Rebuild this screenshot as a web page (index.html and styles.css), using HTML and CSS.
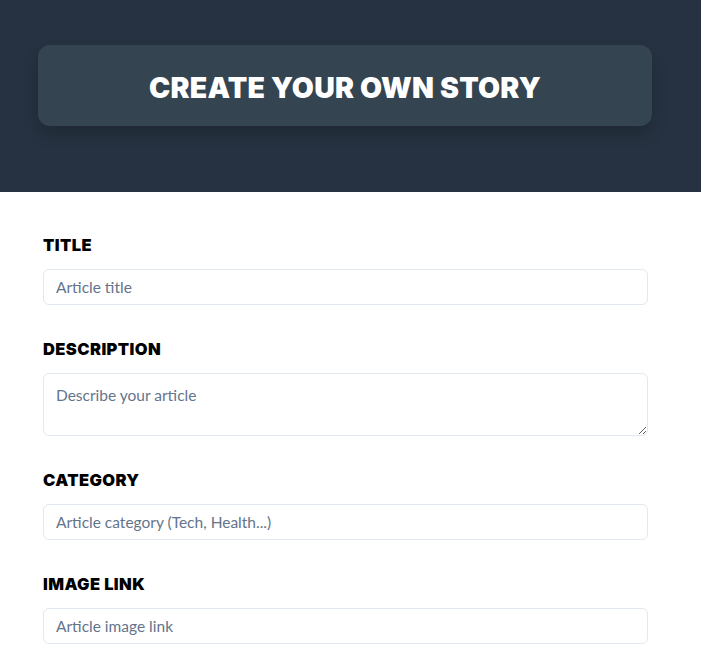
FILE: index.html
```html
<!DOCTYPE html>
<html lang="en">
<head>
<meta charset="utf-8">
<title>Create your own story</title>
<link rel="stylesheet" href="styles.css">
</head>
<body>
<header class="hero">
  <div class="hero-card">
    <h1 class="hero-title">CREATE YOUR OWN STORY</h1>
  </div>
</header>
<main class="form">
  <div class="field">
    <label class="label" for="title">TITLE</label>
    <input class="input" id="title" type="text" placeholder="Article title">
  </div>
  <div class="field">
    <label class="label" for="desc">DESCRIPTION</label>
    <textarea class="input textarea" id="desc" placeholder="Describe your article"></textarea>
  </div>
  <div class="field">
    <label class="label" for="cat">CATEGORY</label>
    <input class="input" id="cat" type="text" placeholder="Article category (Tech, Health...)">
  </div>
  <div class="field">
    <label class="label" for="img">IMAGE LINK</label>
    <input class="input" id="img" type="text" placeholder="Article image link">
  </div>
</main>
</body>
</html>
```
FILE: styles.css
```css
* { box-sizing: border-box; }
html, body { margin: 0; padding: 0; background: #ffffff; }
body { font-family: Lato, "Noto Sans", sans-serif; }

.hero {
  background: #263241;
  height: 192px;
  padding: 45px 49px 0 38px;
}
.hero-card {
  background: #344451;
  height: 81px;
  border-radius: 12px;
  box-shadow: 0 8px 16px rgba(0, 0, 0, 0.18);
  display: flex;
  align-items: center;
  justify-content: center;
  padding-top: 3px;
}
.hero-title {
  margin: 0;
  color: #ffffff;
  font-family: Inter, Roboto, sans-serif;
  font-weight: 900;
  font-size: 28.5px;
  letter-spacing: 0.2px;
}

.form {
  padding: 43px 53px 0 43px;
  display: flex;
  flex-direction: column;
  gap: 34px;
}
.field {
  display: flex;
  flex-direction: column;
  gap: 14px;
}
.label {
  font-family: Inter, Roboto, sans-serif;
  font-weight: 900;
  font-size: 16.5px;
  line-height: 20px;
  letter-spacing: 0.4px;
  color: #000000;
}
.input {
  height: 36px;
  width: 100%;
  border: 1px solid #e2e8f0;
  border-radius: 6px;
  padding: 0 12px;
  font-family: Lato, "Noto Sans", sans-serif;
  font-size: 15.5px;
  color: #1e293b;
  background: #ffffff;
  outline: none;
}
.input::placeholder { color: #64748b; }
.textarea {
  height: 63px;
  padding: 11px 12px;
  resize: vertical;
  line-height: 20px;
}
```
